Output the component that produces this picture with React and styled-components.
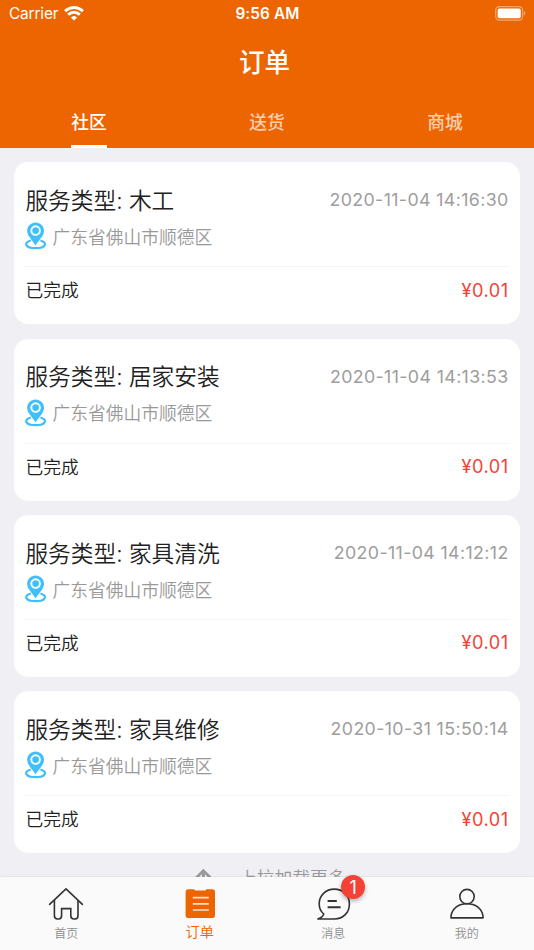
import React from 'react';
import styled, { createGlobalStyle } from 'styled-components';

const GlobalStyle = createGlobalStyle`
  * {
    box-sizing: border-box;
  }
  body {
    margin: 0;
    font-family: Inter, "Noto Sans CJK SC", sans-serif;
    color: #212121;
  }
`;

const Screen = styled.div`
  width: 534px;
  height: 950px;
  display: flex;
  flex-direction: column;
  overflow: hidden;
  background-color: #efeff4;
`;

const Header = styled.header`
  height: 148px;
  flex-shrink: 0;
  background-color: #ed6500;
  color: white;
`;

const StatusBar = styled.div`
  height: 28px;
  padding: 0 8px 0 9px;
  display: grid;
  grid-template-columns: 1fr auto 1fr;
  align-items: center;
`;

const Carrier = styled.div`
  display: flex;
  align-items: center;
  gap: 6px;
  font-size: 15.4px;
  line-height: 28px;
  letter-spacing: -0.15px;
`;

const Clock = styled.div`
  font-size: 15.3px;
  font-weight: 600;
  line-height: 28px;
  letter-spacing: 0.15px;
`;

const Battery = styled.svg`
  justify-self: end;
  margin-bottom: 2px;
`;

const WifiMark = styled.svg`
  margin-bottom: 2px;
`;

const PageTitle = styled.h1`
  margin: 0;
  height: 68px;
  padding-right: 5px;
  line-height: 69px;
  font-size: 25.6px;
  font-weight: 500;
  text-align: center;
`;

const Tabs = styled.nav`
  display: grid;
  grid-template-columns: repeat(3, 1fr);
  justify-items: center;
`;

const Tab = styled.div`
  height: 52px;
  line-height: 53px;
  font-size: 17.8px;
  font-weight: 500;
  color: ${props => (props.$active ? '#fff' : 'rgba(255, 255, 255, 0.7)')};
  border-bottom: 3px solid ${props => (props.$active ? '#fff' : 'transparent')};
`;

const OrderList = styled.main`
  flex: 1;
  min-height: 0;
  overflow: hidden;
  padding: 14.4px 14.4px 0;
`;

const Card = styled.section`
  height: 161.9px;
  margin-bottom: 14.4px;
  padding: 20px 11px 0;
  border-radius: 14.4px;
  background-color: white;
`;

const Row = styled.div`
  display: flex;
  align-items: center;
  justify-content: space-between;
  height: 36px;
`;

const Service = styled.div`
  font-size: 22.7px;
  font-weight: 350;
  line-height: 36px;
  padding-top: 1.4px;
`;

const OrderTime = styled.div`
  font-size: 17.8px;
  line-height: 36px;
  letter-spacing: 0.37px;
  color: #9e9e9e;
`;

const Address = styled.div`
  display: flex;
  align-items: center;
  gap: 5px;
  height: 37px;
  font-size: 17.75px;
  font-weight: 350;
  line-height: 37px;
  color: #999;
`;

const AddressText = styled.span`
  padding-top: 1.4px;
`;

const PinMark = styled.svg`
  margin-bottom: 1px;
`;

const Summary = styled(Row)`
  height: 46px;
  margin-top: 11px;
  border-top: 1.4px solid #f4f4f5;
  font-size: 17.8px;
`;

const Status = styled.span`
  font-weight: 350;
  padding-bottom: 1px;
`;

const Price = styled.span`
  color: #f44336;
  font-size: 18.2px;
  letter-spacing: 0.5px;
`;

const LoadMore = styled.div`
  display: flex;
  align-items: center;
  gap: 25px;
  height: 22px;
  margin-left: 178.5px;
  font-size: 17.8px;
  font-weight: 350;
  line-height: 22px;
  color: #999;
`;

const LoadMoreText = styled.span`
  padding-top: 1px;
`;

const BottomBar = styled.footer`
  position: relative;
  height: 73px;
  flex-shrink: 0;
  display: grid;
  grid-template-columns: repeat(4, 1fr);
  background-color: #fafafa;
  box-shadow: 0 0 2px rgba(0, 0, 0, 0.12);
`;

const BarItem = styled.div`
  display: flex;
  flex-direction: column;
  align-items: center;
  padding-top: 9px;
  padding-right: 1px;
  font-size: ${props => (props.$active ? '14.2px' : '12px')};
  font-weight: 350;
  line-height: ${props => (props.$active ? '17px' : '22px')};
  color: ${props => (props.$active ? '#ed6500' : '#8e8e8e')};
`;

const IconBox = styled.div`
  position: relative;
  width: 36px;
  height: 37px;
`;

const Badge = styled.span`
  position: absolute;
  top: -11px;
  left: 26px;
  width: 24px;
  height: 24px;
  border-radius: 50%;
  background-color: #f44336;
  color: white;
  font-size: 18px;
  font-weight: 400;
  line-height: 25px;
  text-align: center;
  box-shadow: 0 2px 4px rgba(0, 0, 0, 0.3);
`;

const orders = [
  { service: '木工', time: '2020-11-04 14:16:30' },
  { service: '居家安装', time: '2020-11-04 14:13:53' },
  { service: '家具清洗', time: '2020-11-04 14:12:12' },
  { service: '家具维修', time: '2020-10-31 15:50:14' },
];

const WifiIcon = () => (
  <WifiMark width="20" height="15" viewBox="0 0 20 15" fill="none" stroke="#fff" strokeWidth="2.9">
    <path d="M1 5.1 Q10 -2.1 19 5.1" />
    <path d="M4.1 8.7 Q10 3.7 15.9 8.7" />
    <path d="M10 14.6 L6.8 11.5 Q10 8.5 13.2 11.5 Z" fill="#fff" stroke="none" />
  </WifiMark>
);

const BatteryIcon = () => (
  <Battery width="31" height="15" viewBox="0 0 31 15">
    <rect x="0.7" y="0.7" width="27" height="13.4" rx="3.6" fill="none" stroke="#f5a66d" strokeWidth="1.2" />
    <rect x="2.6" y="2.6" width="23.2" height="9.6" rx="1.8" fill="#fff" />
    <path d="M29 4.8 Q31.6 7.3 29 9.8 Z" fill="#f5a66d" />
  </Battery>
);

const PinIcon = () => (
  <PinMark width="22" height="28" viewBox="0 0 22 28">
    <path
      d="M5.8 18.5 C-1.6 20.2 -0.2 26.2 10.6 26.2 C21.4 26.2 22.8 20.2 15.4 18.5"
      fill="none"
      stroke="#40bffa"
      strokeWidth="2.2"
    />
    <path
      d="M10.6 0.4 C5.9 0.4 2.2 4 2.2 8.7 C2.2 13.9 7 17.6 10.6 23.4 C14.2 17.6 19 13.9 19 8.7 C19 4 15.3 0.4 10.6 0.4 Z"
      fill="#40bffa"
    />
    <circle cx="10.6" cy="8.6" r="4.3" fill="#40bffa" stroke="#fff" strokeWidth="1.9" />
  </PinMark>
);

const HomeIcon = () => (
  <svg width="36" height="37" viewBox="0 0 36 37" fill="none" stroke="#333" strokeWidth="1.6">
    <path d="M1.6 18.4 L18 2.8 L34.4 18.4" strokeLinecap="round" strokeLinejoin="round" />
    <path d="M6.4 14 V29.8 Q6.4 33 9.6 33 H10.6 Q13.6 33 13.6 29.8 V22.6 H22.8 V29.8 Q22.8 33 26 33 H27 Q30 33 30 29.8 V14" />
  </svg>
);

const OrderIcon = () => (
  <svg width="36" height="37" viewBox="0 0 36 37">
    <path
      d="M6 3.3 H12.3 Q12.3 4.5 13.5 4.5 H23 Q24.2 4.5 24.2 3.3 H30.5 Q33 3.3 33 5.8 V29.3 Q33 32 30.5 32 H6 Q3.6 32 3.6 29.3 V5.8 Q3.6 3.3 6 3.3 Z"
      fill="#ed6500"
    />
    <path d="M10.8 11.6 H26.8 M10.8 17.8 H26.8 M10.8 24 H26.8" stroke="#fbe0cb" strokeWidth="1.7" />
  </svg>
);

const MessageIcon = () => (
  <svg width="36" height="37" viewBox="0 0 36 37" fill="none" stroke="#333">
    <path
      d="M2.4 33 C5.8 32.1 8 30.3 8.8 28 C5.6 25.3 4.2 21.9 4.2 17.9 C4.2 9.5 10.7 3.1 19.3 3.1 C27.8 3.1 34.4 9.5 34.4 17.9 C34.4 26.5 28.2 33 19.6 33 Z"
      strokeWidth="1.6"
    />
    <path d="M12.6 15 H21.8 M12.6 21.2 H25.6" strokeWidth="2.1" />
  </svg>
);

const ProfileIcon = () => (
  <svg width="36" height="37" viewBox="0 0 36 37" fill="none" stroke="#333" strokeWidth="1.6">
    <circle cx="18" cy="10.6" r="7.2" />
    <path d="M2 31.9 V30 C3.2 22.2 9.8 17.8 18 17.8 C26.2 17.8 32.8 22.2 34 30 V31.9 Z" strokeLinejoin="round" />
  </svg>
);

const ArrowIcon = () => (
  <svg width="21" height="22" viewBox="0 0 21 22" fill="none" stroke="#999" strokeWidth="2.8">
    <path d="M10.4 22 V2.5 M2.5 10.6 L10.4 2.7 L18.3 10.6" />
  </svg>
);

const Order = ({ service, time }) => (
  <Card>
    <Row>
      <Service>服务类型: {service}</Service>
      <OrderTime>{time}</OrderTime>
    </Row>
    <Address>
      <PinIcon />
      <AddressText>广东省佛山市顺德区</AddressText>
    </Address>
    <Summary>
      <Status>已完成</Status>
      <Price>¥0.01</Price>
    </Summary>
  </Card>
);

const App = () => (
  <Screen>
    <GlobalStyle />
    <Header>
      <StatusBar>
        <Carrier>Carrier <WifiIcon /></Carrier>
        <Clock>9:56 AM</Clock>
        <BatteryIcon />
      </StatusBar>
      <PageTitle>订单</PageTitle>
      <Tabs>
        <Tab $active>社区</Tab>
        <Tab>送货</Tab>
        <Tab>商城</Tab>
      </Tabs>
    </Header>
    <OrderList>
      {orders.map(order => (
        <Order key={order.time} service={order.service} time={order.time} />
      ))}
      <LoadMore>
        <ArrowIcon />
        <LoadMoreText>上拉加载更多</LoadMoreText>
      </LoadMore>
    </OrderList>
    <BottomBar>
      <BarItem>
        <IconBox><HomeIcon /></IconBox>
        首页
      </BarItem>
      <BarItem $active>
        <IconBox><OrderIcon /></IconBox>
        订单
      </BarItem>
      <BarItem>
        <IconBox>
          <MessageIcon />
          <Badge>1</Badge>
        </IconBox>
        消息
      </BarItem>
      <BarItem>
        <IconBox><ProfileIcon /></IconBox>
        我的
      </BarItem>
    </BottomBar>
  </Screen>
);

export default App;
